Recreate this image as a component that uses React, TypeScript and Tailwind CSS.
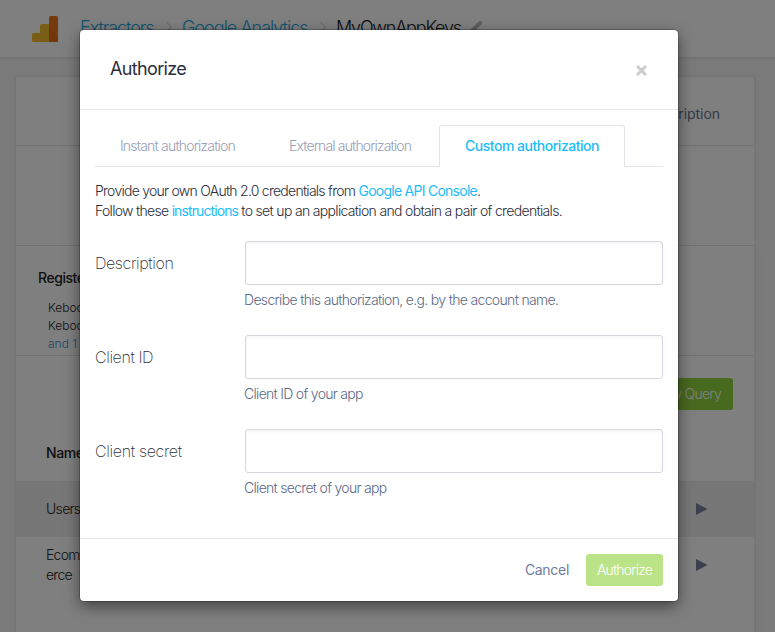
import React from "react";

type Field = { label: string; help: string; labelClass: string; helpClass: string };

const fields: Field[] = [
  { label: "Description", help: "Describe this authorization, e.g. by the account name.", labelClass: "tracking-[-0.4px]", helpClass: "tracking-[-0.67px]" },
  { label: "Client ID", help: "Client ID of your app", labelClass: "tracking-[-0.4px]", helpClass: "tracking-[-0.7px]" },
  { label: "Client secret", help: "Client secret of your app", labelClass: "tracking-[-0.33px]", helpClass: "tracking-[-0.7px]" },
];

function AnalyticsLogo() {
  return (
    <svg width="26" height="26" viewBox="0 0 26 26" className="shrink-0">
      <path d="M10 8H17V26H1.500Q0 26 0 24.500V18.500Q0 17 1.500 17H8V9.500Q8 8 10 8Z" fill="#f5bd2d" />
      <rect x="17" y="0" width="9" height="26" rx="1.500" fill="#ee7420" />
      <path d="M17 12L26 20V24.500Q26 26 24.500 26H17Z" fill="#e56c1a" />
    </svg>
  );
}

function Chevron() {
  return (
    <svg width="6" height="12" viewBox="0 0 6 12" fill="none" stroke="#c4c4c4" className="shrink-0">
      <path d="M.7 1L5.200 6L.7 11" />
    </svg>
  );
}

function Play() {
  return (
    <svg width="12" height="12" viewBox="0 0 12 12" className="shrink-0">
      <path d="M0 0L11.500 6L0 12Z" fill="#74809d" />
    </svg>
  );
}

function Page() {
  return (
    <div className="flex h-full flex-col bg-[#f5f5f5]">
      <header className="flex h-[59px] shrink-0 items-start border-b-2 border-[#e8e8e8] bg-white pl-8 pt-4">
        <AnalyticsLogo />
        <div className="-mt-px ml-[22px] flex h-6 items-center whitespace-nowrap text-[18px] font-light">
          <span className="w-[74px] tracking-[-1.05px] text-[#1fa8e0]">Extractors</span>
          <span className="ml-3 mr-[10px] flex"><Chevron /></span>
          <span className="w-[126px] tracking-[-0.98px] text-[#1fa8e0]">Google Analytics</span>
          <span className="ml-3 mr-[10px] flex"><Chevron /></span>
          <span className="w-[126px] tracking-[-1.2px] text-[#222]">MyOwnAppKeys</span>
          <svg width="15" height="15" viewBox="0 0 15 15" className="ml-[6px]">
            <path d="M3 12L12.200 2.800" stroke="#b9bbc0" strokeWidth="4" strokeLinecap="round" />
          </svg>
        </div>
      </header>
      <main className="mx-[14px] mt-4 flex w-[742px] grow flex-col rounded-t border-2 border-b-0 border-[#eaeaea] bg-white text-[14px] text-[#222]">
        <div className="flex h-[69px] items-start justify-end border-b border-[#e4e4e4] pr-[34px] pt-[27px] leading-5 tracking-[-0.05px] text-[#6a7592]">
          Description
        </div>
        <div className="h-[100px] border-b border-[#e4e4e4]" />
        <div className="h-[110px] border-b border-[#e4e4e4] pl-[22px] pt-[22px]">
          <div className="font-medium leading-5 tracking-[-0.45px]">Registered</div>
          <div className="pl-[10px] pt-[11px] text-[12px] font-light leading-[18px]">
            <div>Keboola</div>
            <div>Keboola</div>
            <div className="text-[#428bca]">and 1 more</div>
          </div>
        </div>
        <div className="flex h-[87px] items-start justify-end pr-[21px] pt-[22px]">
          <div className="flex h-8 items-center rounded-[3px] bg-[#90d43f] px-3 pb-px font-light tracking-[-0.7px] text-white">New Query</div>
        </div>
        <div className="h-[38px] pl-[30px] font-medium leading-5 tracking-[-0.4px]">Name</div>
        <div className="flex h-14 items-center justify-between bg-[#eeeeee] pl-[30px] pr-[46px] font-light tracking-[-0.7px]">
          <span className="-mt-0.5">Users</span>
          <Play />
        </div>
        <div className="flex h-14 items-center justify-between pl-[30px] pr-[46px] font-light leading-5 tracking-[-0.75px]">
          <span>Ecomm<br />erce</span>
          <Play />
        </div>
      </main>
    </div>
  );
}

function Modal() {
  return (
    <section className="flex h-[571px] w-[598px] flex-col rounded bg-white text-[14px] font-light text-[#2b2e3b] shadow-[0_0_0_1px_rgba(0,0,0,.2),0_5px_15px_rgba(0,0,0,.5)]">
      <header className="flex h-20 shrink-0 items-center justify-between border-b border-[#e9e9ec] pl-[30px] pr-[31px]">
        <h1 className="-mt-0.5 text-[18px] font-normal tracking-[-0.65px]">Authorize</h1>
        <svg width="11" height="11" viewBox="0 0 11 11" stroke="#cccccc" strokeWidth="3" className="mt-0.5">
          <path d="M1 1L10 10M10 1L1 10" />
        </svg>
      </header>
      <div className="flex grow flex-col px-[15px] pt-[15px]">
        <nav className="flex h-[42px] shrink-0 items-stretch whitespace-nowrap tracking-[-0.8px] text-[#98a0b5]">
          <div className="flex w-[168px] items-center border-b border-[#e3e4ea] pl-[25px]">Instant authorization</div>
          <div className="flex w-[176px] items-center border-b border-[#e3e4ea] pl-[26px] tracking-[-0.85px]">External authorization</div>
          <div className="flex w-[186px] items-center rounded-t-[3px] border border-b-0 border-[#e3e4ea] pb-0.5 pl-[25px] font-medium tracking-[-0.48px] text-[#1cbcf8]">Custom authorization</div>
          <div className="grow border-b border-[#e3e4ea]" />
        </nav>
        <p className="mt-[14px] whitespace-nowrap leading-5">
          <span className="tracking-[-0.74px]">Provide your own OAuth 2.0 credentials from <a className="font-normal text-[#1cbcf8]">Google API Console</a>.</span>
          <br />
          <span className="tracking-[-0.7px]">Follow these <a className="font-normal tracking-[-0.9px] text-[#1cbcf8]">instructions</a> <span className="tracking-[-0.67px]">to set up an application and obtain a pair of credentials.</span></span>
        </p>
        <form className="mt-5 flex flex-col gap-[30px]">
          {fields.map((f) => (
            <div key={f.label} className="flex h-16">
              <label className="w-[150px] shrink-0 text-[16px] font-extralight leading-[44px]">
                <span className={f.labelClass}>{f.label}</span>
              </label>
              <div className="grow">
                <input className="block h-11 w-full rounded-[3px] border border-[#d5d6e0] bg-white px-3 shadow-[inset_0_2px_3px_rgba(0,0,0,.04)] outline-none" />
                <div className="-ml-px mt-[5px] whitespace-nowrap leading-5 text-[#5d6988]">
                  <span className={f.helpClass}>{f.help}</span>
                </div>
              </div>
            </div>
          ))}
        </form>
      </div>
      <footer className="flex h-[63px] shrink-0 items-start justify-end border-t border-[#e5e5ee] pr-[15px] pt-[15px] leading-8">
        <button className="mr-[17px] font-normal tracking-[-0.3px] text-[#6f7b9b]">Cancel</button>
        <button className="h-8 w-[77px] rounded-[3px] bg-[#bbe488] tracking-[-0.8px] text-white">Authorize</button>
      </footer>
    </section>
  );
}

export default function App() {
  return (
    <div className="relative h-[632px] w-[775px] overflow-hidden font-['Inter','Liberation_Sans',sans-serif]">
      <Page />
      <div className="absolute inset-0 flex items-start bg-black/50 pl-20 pt-[30px]">
        <Modal />
      </div>
    </div>
  );
}
